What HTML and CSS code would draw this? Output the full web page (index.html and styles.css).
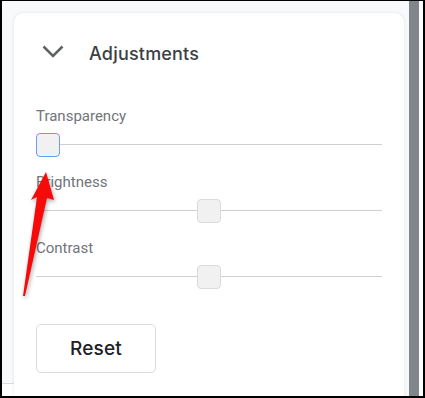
FILE: index.html
```html
<!DOCTYPE html>
<html>
<head>
<meta charset="utf-8">
<link rel="stylesheet" href="styles.css">
</head>
<body>
<div class="frame">
  <div class="main">
    <div class="gutter"><div class="gutter-fill"></div></div>
    <div class="card-col">
      <div class="card">
        <div class="header">
          <svg class="chevron" width="22" height="13" viewBox="0 0 22 13"><polyline points="1.5,1.5 11,11 20.5,1.5" fill="none" stroke="#5f6368" stroke-width="2.5"/></svg>
          <span class="title">Adjustments</span>
        </div>
        <div class="body">
          <div class="field">
            <div class="label">Transparency</div>
            <div class="slider"><div class="thumb focused" style="left: calc((100% - 24px) * 0)"></div></div>
          </div>
          <div class="field">
            <div class="label">Brightness</div>
            <div class="slider"><div class="thumb" style="left: calc((100% - 24px) * 0.5)"></div></div>
          </div>
          <div class="field">
            <div class="label">Contrast</div>
            <div class="slider"><div class="thumb" style="left: calc((100% - 24px) * 0.5)"></div></div>
          </div>
          <button class="reset">Reset</button>
        </div>
      </div>
    </div>
    <div class="gutter-r"></div>
  </div>
  <div class="scrollbar"></div>
  <div class="edge"></div>
</div>
<svg class="arrow" width="425" height="398" viewBox="0 0 425 398">
  <polygon points="46,172 54,200 47,198 25,296 23,296 37,197 31,200" fill="#f70a0a"/>
</svg>
</body>
</html>
```
FILE: styles.css
```css
* { box-sizing: border-box; }
html, body { margin: 0; padding: 0; background: #fff; }
body { position: relative; width: 425px; height: 398px; overflow: hidden; font-family: Roboto, "Liberation Sans", sans-serif; }

.frame {
  width: 425px;
  height: 398px;
  border: 2px solid #000;
  border-top-width: 1px;
  display: flex;
  overflow: hidden;
  background: #fff;
}
.main {
  width: 407px;
  display: flex;
  background: #f8f9fa;
}
.gutter {
  width: 12px;
  display: flex;
  flex-direction: column;
  background: #fff;
}
.gutter-fill {
  height: 383px;
  background: #f8f9fa;
  border-bottom: 1px solid #dadce0;
}
.card-col {
  width: 390px;
  padding-top: 12px;
  display: flex;
  flex-direction: column;
}
.gutter-r { width: 5px; }
.card {
  flex: 1;
  background: #fff;
  border-radius: 9px 9px 0 0;
  box-shadow: 0 0 3px rgba(60, 64, 67, 0.14);
}
.header {
  display: flex;
  align-items: flex-start;
  padding: 31px 0 0 28px;
}
.chevron { display: block; margin-top: 1px; }
.title {
  margin-left: 25px;
  margin-top: -1px;
  font-family: Inter, Roboto, sans-serif;
  font-size: 18px;
  line-height: 21px;
  font-weight: 500;
  letter-spacing: 0.2px;
  color: #3c4043;
}
.body {
  padding: 43px 22px 0 22px;
  display: flex;
  flex-direction: column;
  gap: 16px;
}
.field { display: flex; flex-direction: column; gap: 8px; }
.label {
  font-size: 15px;
  line-height: 18px;
  color: #70757a;
}
.slider {
  position: relative;
  height: 24px;
  background: linear-gradient(#cfcfcf, #cfcfcf) 0 11px / 100% 1px no-repeat;
}
.thumb {
  position: absolute;
  top: 0;
  width: 24px;
  height: 24px;
  background: #f1f1f1;
  border: 1px solid #dadada;
  border-radius: 4px;
}
.thumb.focused { border-color: #6b9df0; }
.reset {
  margin-top: 19px;
  width: 120px;
  height: 49px;
  background: #fff;
  border: 1px solid #dadce0;
  border-radius: 5px;
  font-family: Inter, Roboto, sans-serif;
  font-size: 19px;
  font-weight: 500;
  letter-spacing: 0.2px;
  color: #202124;
  padding: 0;
}
.scrollbar { width: 10px; background: #80868b; }
.edge { width: 4px; background: #fff; }
.arrow {
  position: absolute;
  left: 0;
  top: 0;
  pointer-events: none;
  filter: drop-shadow(1px 2px 2px rgba(0, 0, 0, 0.35));
}
```
